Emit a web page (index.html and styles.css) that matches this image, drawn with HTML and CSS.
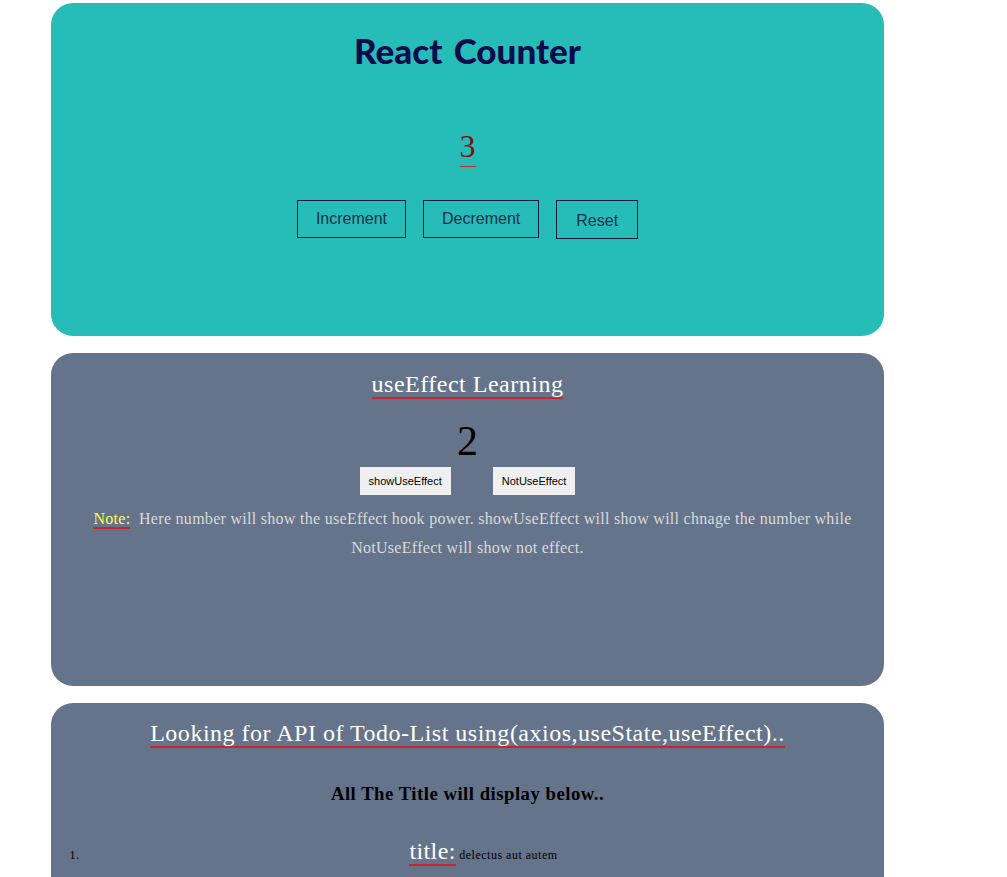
FILE: index.html
```html
<!DOCTYPE html>
<html>
<head>
<meta charset="utf-8">
<link rel="stylesheet" href="styles.css">
</head>
<body>
<div class="page">
  <section class="card card-counter">
    <h1 class="counter-title">React Counter</h1>
    <div class="counter-value"><span class="red-line thin">3</span></div>
    <div class="counter-actions">
      <button class="outline-btn">Increment</button>
      <button class="outline-btn">Decrement</button>
      <button class="outline-btn reset">Reset</button>
    </div>
  </section>

  <section class="card card-slate card-effect">
    <h2 class="card-heading"><span class="red-line">useEffect Learning</span></h2>
    <div class="effect-value">2</div>
    <div class="effect-actions">
      <button class="grey-btn">showUseEffect</button>
      <button class="grey-btn">NotUseEffect</button>
    </div>
    <p class="note"><span class="note-label red-line">Note:</span>&nbsp; Here number will show the useEffect hook power. showUseEffect will show will chnage the number while NotUseEffect will show not effect.</p>
  </section>

  <section class="card card-slate card-todo">
    <h2 class="card-heading"><span class="red-line">Looking for API of Todo-List using(axios,useState,useEffect)..</span></h2>
    <h3 class="todo-sub">All The Title will display below..</h3>
    <ol class="todo-list">
      <li class="todo-item"><span class="todo-label red-line">title:</span> delectus aut autem</li>
    </ol>
  </section>
</div>
</body>
</html>
```

FILE: styles.css
```css
html, body {
  margin: 0;
  padding: 0;
  background: #ffffff;
}

body {
  font-family: "Liberation Serif", "Times New Roman", serif;
  letter-spacing: 0.018em;
}

.page {
  width: 833px;
  margin: 3px 0 0 51px;
  display: flex;
  flex-direction: column;
  gap: 17px;
}

.card {
  border-radius: 22px;
  display: flex;
  flex-direction: column;
  align-items: center;
  text-align: center;
  box-sizing: border-box;
}

.card-counter {
  background: #26bdb8;
  height: 333px;
}

.card-slate {
  background: #65748a;
}

.card-effect {
  height: 333px;
  padding-top: 17px;
}

.card-todo {
  padding-top: 16px;
  min-height: 400px;
  align-items: stretch;
}

.red-line {
  border-bottom: 2px solid #c9252f;
}

.red-line.thin {
  border-bottom-width: 1px;
  padding-bottom: 2px;
}

.counter-title {
  margin: 24px 0 0;
  font-family: "Comic Sans MS", "Lato", sans-serif;
  font-weight: 900;
  font-size: 35px;
  line-height: 46px;
  letter-spacing: 0;
  color: #0c0b4b;
  word-spacing: 3px;
}

.counter-value {
  margin-top: 55px;
  font-size: 32px;
  line-height: 36px;
  letter-spacing: 0;
  color: #7d1010;
}

.counter-actions {
  margin-top: 36px;
  display: flex;
  gap: 17px;
  align-items: flex-start;
}

.outline-btn {
  background: transparent;
  border: 1px solid #0e1a3c;
  font-family: "Liberation Sans", Arial, sans-serif;
  font-size: 16px;
  line-height: 18px;
  letter-spacing: 0;
  color: #13304c;
  padding: 9px 18px;
  margin: 0;
}

.outline-btn.reset {
  padding: 11px 19px 8px;
}

.card-heading {
  margin: 0;
  font-weight: normal;
  font-size: 24px;
  line-height: 28px;
  letter-spacing: 0.021em;
  color: #ffffff;
}

.effect-value {
  margin-top: 19px;
  font-size: 42px;
  line-height: 48px;
  letter-spacing: 0;
  color: #000000;
}

.effect-actions {
  margin-top: 2px;
  display: flex;
  gap: 42px;
}

.grey-btn {
  background: #efefef;
  border: none;
  font-family: "Liberation Sans", Arial, sans-serif;
  font-size: 11px;
  line-height: 14px;
  height: 28px;
  letter-spacing: 0;
  color: #000000;
  padding: 7px 9px;
  margin: 0;
}

.note {
  margin: 9px 0 0;
  padding: 0 30px;
  font-size: 16px;
  line-height: 29px;
  color: #dadada;
}

.note-label {
  color: #ffff4d;
  margin-left: 10px;
}

.todo-sub {
  margin: 36px 0 0;
  font-size: 18.72px;
  line-height: 22px;
  font-weight: bold;
  letter-spacing: 0.5px;
  color: #000000;
}

.todo-list {
  margin: 33px 0 0;
  padding-left: 32px;
}

.todo-item {
  font-size: 12px;
  letter-spacing: 0.5px;
  color: #000000;
  text-align: center;
}

.todo-label {
  font-size: 24px;
  letter-spacing: 0.4px;
  color: #ffffff;
}
```
